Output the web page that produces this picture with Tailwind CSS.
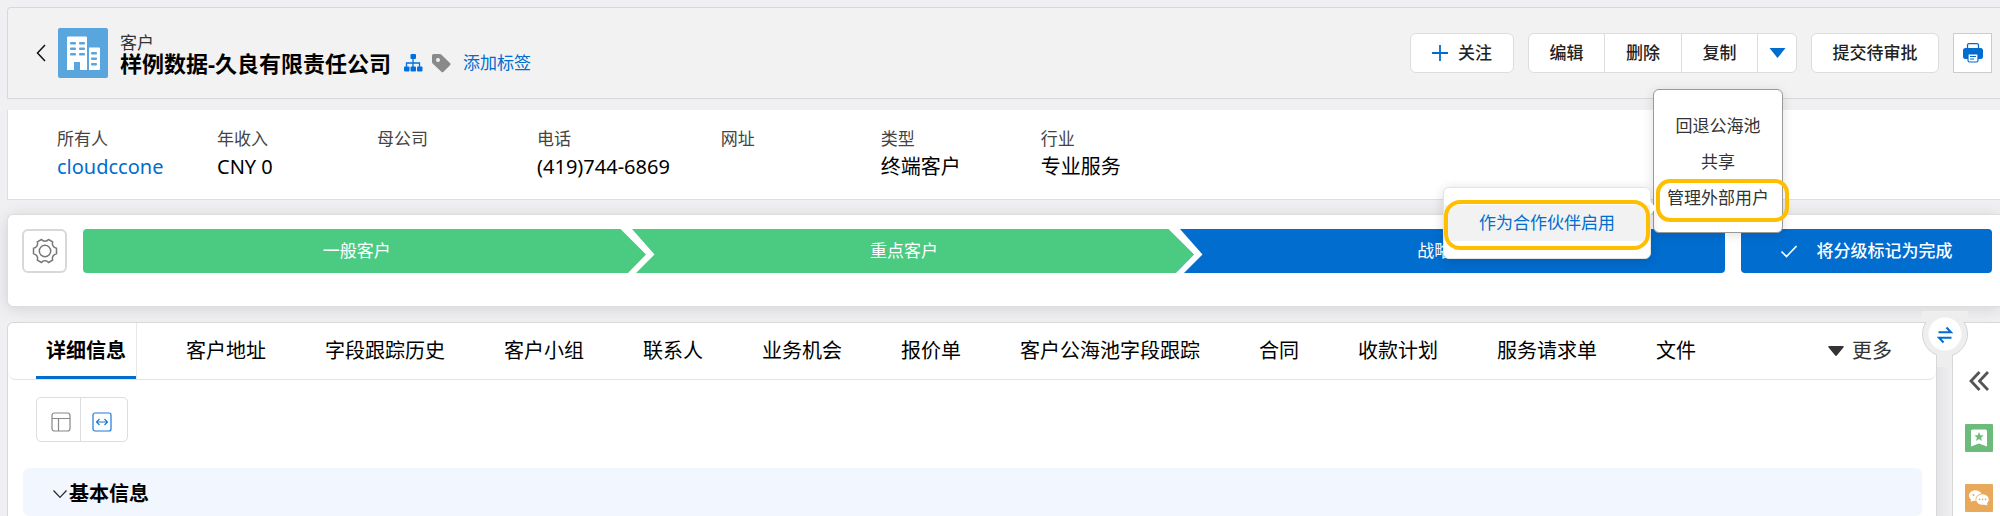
<!DOCTYPE html>
<html lang="zh-CN">
<head>
  <meta charset="UTF-8" />
  <meta name="viewport" content="width=device-width, initial-scale=1.0" />
  <title>客户 - 样例数据-久良有限责任公司</title>
  <script src="https://cdn.jsdelivr.net/npm/@tailwindcss/browser@4"></script>
</head>
<body class="bg-[#f0f0f3] text-black font-['Noto_Sans','Noto_Sans_CJK_SC',sans-serif]">
  <div class="flex flex-col h-screen overflow-hidden pt-[7px] pl-[7px]">

    <!-- Header -->
    <header class="flex items-center justify-between py-5 pl-7 pr-2 bg-[#f2f2f2] border border-r-0 border-[#d8d8d8] rounded-tl shrink-0">
      <div class="flex items-center">
        <button aria-label="返回" class="mr-3">
          <svg class="w-[10px] h-[18px]" viewBox="0 0 10 18" fill="none" stroke="#111" stroke-width="1.5"><path d="M9 1 1.5 9 9 17" /></svg>
        </button>
        <svg class="w-[50px] h-[50px] mr-3" viewBox="0 0 50 50">
          <rect width="50" height="50" rx="2" fill="#59a5dd" />
          <path fill="#fff" d="M9 9.500a1 1 0 0 1 1-1h18a1 1 0 0 1 1 1v32.500h-7v-8h-6v8h-7zM31 19.500h10a1 1 0 0 1 1 1v20.500a1 1 0 0 1-1 1H31z" />
          <g fill="#59a5dd">
            <rect x="12" y="14" width="6" height="2.500" rx="1" /><rect x="21" y="14" width="6" height="2.500" rx="1" />
            <rect x="12" y="19.500" width="6" height="2.500" rx="1" /><rect x="21" y="19.500" width="6" height="2.500" rx="1" />
            <rect x="12" y="25" width="6" height="2.500" rx="1" /><rect x="21" y="25" width="6" height="2.500" rx="1" />
            <rect x="33" y="24" width="6" height="2.500" rx="1" /><rect x="33" y="29.500" width="6" height="2.500" rx="1" /><rect x="33" y="35" width="6" height="2.500" rx="1" />
          </g>
        </svg>
        <div>
          <p class="text-[17px] leading-5 text-[#333]">客户</p>
          <div class="flex items-center h-5">
            <h1 class="text-[22px] leading-5 font-bold">样例数据-久良有限责任公司</h1>
            <button aria-label="层级" class="ml-3">
              <svg class="w-5 h-5" viewBox="0 0 20 20">
                <path d="M10 6v4M3.500 14v-4h13v4M10 10v4" fill="none" stroke="#0070e0" stroke-width="1.300" />
                <g fill="#0070e0"><rect x="7.500" y="1" width="5.500" height="5" rx="1" /><rect x="1" y="13.500" width="5.500" height="5" rx="1" /><rect x="7.500" y="13.500" width="5.500" height="5" rx="1" /><rect x="14" y="13.500" width="5.500" height="5" rx="1" /></g>
              </svg>
            </button>
            <svg class="w-5 h-5 ml-2" viewBox="0 0 20 20">
              <path fill="#8a8a8a" fill-rule="evenodd" d="M1 2.500A1.500 1.500 0 0 1 2.500 1h6.300a2 2 0 0 1 1.400.6l8.800 8.500a1.500 1.500 0 0 1 0 2.100l-6.500 6.600a1.500 1.500 0 0 1-2.100 0L1.600 10.500A2 2 0 0 1 1 9zM7 9a2 2 0 1 0 0-4 2 2 0 0 0 0 4z" />
            </svg>
            <a href="#" class="ml-3 text-[17px] leading-5 text-[#006dcf]">添加标签</a>
          </div>
        </div>
      </div>

      <div class="flex items-center gap-[14px] text-[17px] leading-5 font-medium text-[#222]">
        <button class="flex items-center justify-center gap-[10px] w-[104px] h-10 bg-white border border-[#ddd] rounded-md">
          <svg class="w-4 h-4" viewBox="0 0 16 16" stroke="#006dcf" stroke-width="1.800"><path d="M8 0v16M0 8h16" /></svg>
          关注
        </button>
        <div class="flex h-10 bg-white border border-[#ddd] rounded-md divide-x divide-[#ddd]">
          <button class="w-[76px]">编辑</button>
          <button class="w-[77px]">删除</button>
          <button class="w-[76px]">复制</button>
          <div class="relative w-[38px]">
            <button aria-label="更多操作" class="flex items-center justify-center w-full h-full">
              <svg class="w-[17px] h-[10px]" viewBox="0 0 17 10"><path d="M.5 0h16L8.500 10z" fill="#006dcf" /></svg>
            </button>
            <!-- More actions menu -->
            <div class="absolute z-20 top-[55px] right-[13px] w-[130px] h-[144px] pt-[18px] bg-white border border-[#999] rounded-md shadow-[0_2px_12px_rgba(0,0,0,0.12)] font-normal text-[#333]">
              <button class="block w-full h-9">回退公海池</button>
              <button class="block w-full h-9">共享</button>
              <button class="block w-full h-9">管理外部用户</button>
              <div class="absolute top-[89px] left-[2px] w-[133px] h-[43px] border-4 border-[#ffbf00] rounded-[14px] pointer-events-none"></div>
              <!-- Submenu -->
              <div class="absolute top-[97px] right-[131px] w-[208px] h-[72px] py-[17px] bg-white border border-[#e4e4e4] rounded-md shadow-[0_2px_12px_rgba(0,0,0,0.15)]">
                <svg class="absolute top-[13px] -right-[6px] w-[6px] h-[14px]" viewBox="0 0 6 14"><path d="M0 0l6 7-6 7z" fill="#fff" /></svg>
                <button class="block w-full h-9 bg-[#f2f2f2] text-[#006dcf]">作为合作伙伴启用</button>
                <div class="absolute top-3 left-0 w-[206px] h-[50px] border-4 border-[#ffbf00] rounded-2xl pointer-events-none"></div>
              </div>
            </div>
          </div>
        </div>
        <button class="w-[128px] h-10 bg-white border border-[#ddd] rounded-md">提交待审批</button>
        <button aria-label="打印" class="flex items-center justify-center w-[39px] h-10 bg-white border border-[#ccc]">
          <svg class="w-5 h-5" viewBox="0 0 20 20">
            <path d="M4.500 5V2A1.500 1.500 0 0 1 6 .7h8A1.500 1.500 0 0 1 15.500 2v3" fill="none" stroke="#006dcf" stroke-width="1.300" />
            <path d="M2.500 5h15A2.500 2.500 0 0 1 20 7.500v6a2.500 2.500 0 0 1-2.500 2.500h-15A2.500 2.500 0 0 1 0 13.500v-6A2.500 2.500 0 0 1 2.500 5z" fill="#006dcf" />
            <path d="M5 11h10v6.500a1.500 1.500 0 0 1-1.500 1.500h-7A1.500 1.500 0 0 1 5 17.500z" fill="#fff" stroke="#006dcf" stroke-width="1.200" />
            <path d="M7 13.500h6M7 16h4" stroke="#006dcf" stroke-width="1.200" />
          </svg>
        </button>
      </div>
    </header>

    <!-- Key fields -->
    <dl class="flex mt-[11px] pt-[17px] pb-[18px] pl-[49px] bg-white border-l border-b border-[#dedede] shrink-0 text-[20px] leading-7 [&>div]:min-w-40 [&>div]:pr-[51px] [&_dt]:text-[17px] [&_dt]:leading-6 [&_dt]:mb-[2px] [&_dt]:text-[#444]">
      <div><dt>所有人</dt><dd><a href="#" class="text-[#006dcf]">cloudccone</a></dd></div>
      <div><dt>年收入</dt><dd>CNY 0</dd></div>
      <div><dt>母公司</dt><dd></dd></div>
      <div><dt>电话</dt><dd>(419)744-6869</dd></div>
      <div><dt>网址</dt><dd></dd></div>
      <div><dt>类型</dt><dd>终端客户</dd></div>
      <div><dt>行业</dt><dd>专业服务</dd></div>
    </dl>

    <!-- Stage path -->
    <section class="flex mt-[14px] pt-[14px] pb-[33px] pl-[14px] pr-2 bg-white border border-r-0 border-[#ddd] rounded-l-md shadow-[0_2px_16px_rgba(0,0,0,0.12)] shrink-0 text-[17px] text-white">
      <button aria-label="设置" class="flex items-center justify-center w-[45px] h-11 mr-4 border-2 border-[#dbd7d7] rounded-md">
        <svg class="w-[26px] h-[26px]" viewBox="0 0 26 26" fill="none" stroke="#777" stroke-width="1.500" stroke-linejoin="round">
          <path d="M9.500 1.500c1 1.300 2 1.700 3.500 1.700s2.500-.4 3.500-1.700l4.200 2.400c-.6 1.600-.4 2.700.3 4s1.700 2 3.500 2.300v5.600c-1.800.3-2.800 1-3.500 2.300s-.9 2.400-.3 4l-4.200 2.400c-1-1.300-2-1.700-3.500-1.700s-2.500.4-3.500 1.700l-4.200-2.400c.6-1.600.4-2.700-.3-4s-1.700-2-3.500-2.300v-5.600c1.800-.3 2.800-1 3.500-2.300s.9-2.400.3-4z" />
          <circle cx="13" cy="13" r="5.700" />
        </svg>
      </button>
      <ol class="flex flex-1 h-11 rounded overflow-hidden text-center leading-[44px]">
        <li class="relative flex-1 bg-[#4bca81]">
          一般客户
          <svg class="absolute z-10 top-0 -right-[25px] w-[35px] h-11" viewBox="0 0 35 44"><path d="M0 0h1l25 25.500L8 44H0z" fill="#4bca81" /><path d="M.5 0H12l22.500 25.500L16 44H8l18-18.500z" fill="#fff" /></svg>
        </li>
        <li class="relative flex-1 bg-[#4bca81]">
          重点客户
          <svg class="absolute z-10 top-0 -right-[25px] w-[35px] h-11" viewBox="0 0 35 44"><path d="M0 0h1l25 25.500L8 44H0z" fill="#4bca81" /><path d="M.5 0H12l22.500 25.500L16 44H8l18-18.500z" fill="#fff" /></svg>
        </li>
        <li class="flex-1 bg-[#006dcf]">战略客户</li>
      </ol>
      <button class="flex items-center justify-center gap-5 w-[251px] h-11 ml-4 bg-[#006dcf] rounded font-medium">
        <svg class="w-4 h-4" viewBox="0 0 16 16" fill="none" stroke="#fff" stroke-width="1.600"><path d="M.5 8.500 5.500 13.500 15.500 3" /></svg>
        将分级标记为完成
      </button>
    </section>

    <div class="flex flex-1 mt-[15px]">
      <!-- Tabs -->
      <main class="flex-1 bg-white border border-b-0 border-[#d8d8d8] rounded-tl-md">
        <nav class="flex items-stretch justify-between h-[57px] pl-7 pr-11 border-b border-[#e2e2e2] rounded-b-lg text-[20px] leading-7">
          <div class="flex gap-[39px] [&>a]:flex [&>a]:items-center [&>a]:px-[10px]">
            <a href="#" class="font-bold border-r border-[#e8e8e8] shadow-[inset_0_-3px_0_#006dcf]">详细信息</a>
            <a href="#">客户地址</a>
            <a href="#">字段跟踪历史</a>
            <a href="#">客户小组</a>
            <a href="#">联系人</a>
            <a href="#">业务机会</a>
            <a href="#">报价单</a>
            <a href="#">客户公海池字段跟踪</a>
            <a href="#">合同</a>
            <a href="#">收款计划</a>
            <a href="#">服务请求单</a>
            <a href="#">文件</a>
          </div>
          <button class="flex items-center gap-2 text-[#333]">
            <svg class="w-4 h-[10px]" viewBox="0 0 16 10"><path d="M1 0h14a.8.8 0 0 1 .6 1.300L8.800 9.500a1 1 0 0 1-1.600 0L.4 1.300A.8.8 0 0 1 1 0z" fill="#333" /></svg>
            更多
          </button>
        </nav>

        <!-- Layout switch -->
        <div class="flex w-[92px] h-[45px] mt-[17px] ml-7 border border-[#ddd] rounded-[5px]">
          <button aria-label="分栏布局" class="flex items-center justify-center w-[44px] pt-1 pl-1 border-r border-[#ddd]">
            <svg class="w-5 h-5" viewBox="0 0 20 20" fill="none" stroke="#888" stroke-width="1.200"><rect x="1" y="1" width="18" height="18" rx="2.500" /><path d="M1 6.500h18M7.500 6.500V19" /></svg>
          </button>
          <button aria-label="通栏布局" class="flex items-center justify-center flex-1 pt-1 pr-1">
            <svg class="w-5 h-5" viewBox="0 0 20 20" fill="none" stroke="#1a7bd8" stroke-width="1.200"><rect x="1" y="1" width="18" height="18" rx="2" /><path d="M4.500 10h11M7.500 7l-3 3 3 3M12.500 7l3 3-3 3" /></svg>
          </button>
        </div>

        <div class="mt-[26px] ml-[15px] mr-[14px] h-12 flex items-center pt-1 pl-[30px] bg-[#f2f6fe] rounded-md">
          <button class="flex items-center gap-[2px] text-[20px] leading-7 font-bold">
            <svg class="w-[14px] h-2" viewBox="0 0 14 8" fill="none" stroke="#222" stroke-width="1.200"><path d="M.5.5 7 7.300 13.500.5" /></svg>
            基本信息
          </button>
        </div>
      </main>

      <!-- Splitter -->
      <div class="relative w-[15px] bg-linear-to-r from-[#e4e4e6] to-[#f0f0f3]">
        <button aria-label="切换面板" class="absolute z-10 -top-[11px] -left-[15px] w-[46px] h-14">
          <svg class="w-[46px] h-14" viewBox="0 0 46 56">
            <circle cx="23" cy="23" r="22.500" fill="#eee" stroke="#d4d4d4" />
            <path d="M0 0h46v11H0zM15 40h15v16H15z" fill="#eee" />
            <circle cx="23" cy="23" r="16.500" fill="#fff" />
            <path d="M16.500 21.300h12.500l-4.500-4.800M29.500 26.700H17l4.500 4.800" fill="none" stroke="#006dcf" stroke-width="2" />
          </svg>
        </button>
      </div>

      <!-- Side tools -->
      <aside class="flex flex-col items-end w-12 pt-12 pr-[7px] bg-white border-l border-t border-[#d8d8d8]">
        <button aria-label="展开" class="mr-1">
          <svg class="w-5 h-5" viewBox="0 0 20 20" fill="none" stroke="#555" stroke-width="2.800"><path d="M10.500 1 2 10l8.500 9M19 1l-8.500 9 8.500 9" /></svg>
        </button>
        <button aria-label="收藏" class="mt-[33px]">
          <svg class="w-7 h-7" viewBox="0 0 28 28">
            <rect width="28" height="28" rx="1" fill="#6bbb7a" />
            <path d="M6 7a1.500 1.500 0 0 1 1.500-1.500h13A1.500 1.500 0 0 1 22 7v15.500l-8-3-8 3z" fill="#fff" />
            <path d="M14 8l1.300 3.200 3.400.2-2.600 2.200.8 3.400-2.900-1.900-2.900 1.900.8-3.400-2.600-2.200 3.400-.2z" fill="#6bbb7a" />
          </svg>
        </button>
        <button aria-label="消息" class="mt-8">
          <svg class="w-7 h-7" viewBox="0 0 28 28">
            <rect width="28" height="28" rx="1" fill="#e9a95b" />
            <path d="M10.500 6.500c-3.600 0-6.300 2.300-6.300 5.100 0 1.500.7 2.800 1.800 3.700l-.2 2.700 2.700-1.600 1.800.2" fill="#fff" />
            <ellipse cx="10.500" cy="11.500" rx="6.300" ry="5.200" fill="#fff" />
            <ellipse cx="17.500" cy="15.500" rx="7" ry="6" fill="#e9a95b" />
            <ellipse cx="17.500" cy="15.500" rx="6.300" ry="5.200" fill="#fff" />
            <path d="M18 20.300l4.300 1.300-.3-3z" fill="#fff" />
            <g fill="#e9a95b"><circle cx="8.500" cy="11" r="1" /><circle cx="14.500" cy="15.300" r=".9" /><circle cx="17.500" cy="15.300" r=".9" /><circle cx="20.500" cy="15.300" r=".9" /></g>
          </svg>
        </button>
      </aside>
    </div>
  </div>
</body>
</html>
